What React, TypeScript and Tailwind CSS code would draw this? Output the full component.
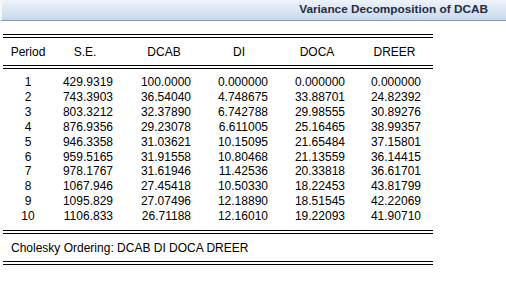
const rows: [string, string, string, string, string, string][] = [
  ['1', '429.9319', '100.0000', '0.000000', '0.000000', '0.000000'],
  ['2', '743.3903', '36.54040', '4.748675', '33.88701', '24.82392'],
  ['3', '803.3212', '32.37890', '6.742788', '29.98555', '30.89276'],
  ['4', '876.9356', '29.23078', '6.611005', '25.16465', '38.99357'],
  ['5', '946.3358', '31.03621', '10.15095', '21.65484', '37.15801'],
  ['6', '959.5165', '31.91558', '10.80468', '21.13559', '36.14415'],
  ['7', '978.1767', '31.61946', '11.42536', '20.33818', '36.61701'],
  ['8', '1067.946', '27.45418', '10.50330', '18.22453', '43.81799'],
  ['9', '1095.829', '27.07496', '12.18890', '18.51545', '42.22069'],
  ['10', '1106.833', '26.71188', '12.16010', '19.22093', '41.90710'],
];

const grid = 'grid grid-cols-[56px_65px_77px_77px_77px_77px]';

function DoubleRule() {
  return (
    <div className="w-[430px] ml-[3px] flex flex-col gap-[2px]">
      <div className="h-px bg-black" />
      <div className="h-px bg-black" />
    </div>
  );
}

export default function App() {
  return (
    <div className="w-[506px] h-[282px] bg-white overflow-hidden text-[12px] text-black font-['Liberation_Sans',Arial,sans-serif]">
      <div className="h-[21px] border-b border-[#8c99a8] border-l-2 border-l-[#f4f8fc] bg-gradient-to-b from-[#edf3fa] to-[#c8d8ee] flex items-center justify-end pr-[18px]">
        <span className="font-bold text-[11.8px] text-[#1f2d3d]">Variance Decomposition of DCAB</span>
      </div>

      <div className="pt-[13px]">
        <DoubleRule />
        <div className={`${grid} h-[27px] items-center`}>
          <div className="text-center">Period</div>
          <div className="text-center pr-[7px]">S.E.</div>
          <div className="text-center pl-[9px]">DCAB</div>
          <div className="text-center pl-[5px]">DI</div>
          <div className="text-center pl-[7px]">DOCA</div>
          <div className="text-center pl-[8px]">DREER</div>
        </div>
        <DoubleRule />

        <div className="pt-[6px] pb-[6px]">
          {rows.map((r) => (
            <div key={r[0]} className={`${grid} leading-[14.9px]`}>
              <div className="text-center">{r[0]}</div>
              <div className="text-right pr-[8px]">{r[1]}</div>
              <div className="text-right pr-[7px]">{r[2]}</div>
              <div className="text-right pr-[7px]">{r[3]}</div>
              <div className="text-right pr-[7px]">{r[4]}</div>
              <div className="text-right pr-[8px]">{r[5]}</div>
            </div>
          ))}
        </div>

        <DoubleRule />
        <div className="h-[27px] flex items-center pl-[11px]">Cholesky Ordering: DCAB DI DOCA DREER</div>
        <DoubleRule />
      </div>
    </div>
  );
}
